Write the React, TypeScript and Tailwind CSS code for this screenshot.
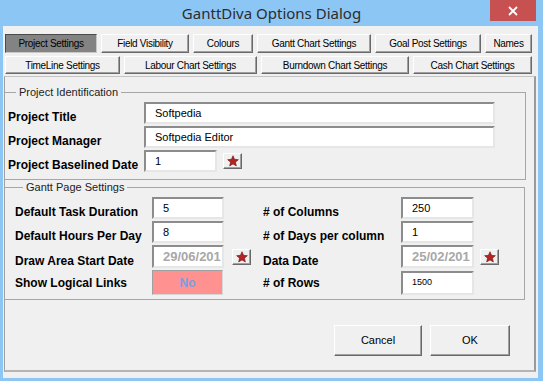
const row1 = [
  { label: 'Project Settings', w: 'w-[92px]', active: true },
  { label: 'Field Visibility', w: 'w-[88px]' },
  { label: 'Colours', w: 'w-[60px]' },
  { label: 'Gantt Chart Settings', w: 'w-[114px]' },
  { label: 'Goal Post Settings', w: 'w-[106px]' },
  { label: 'Names', w: 'w-[47px]' },
];

const row2 = [
  { label: 'TimeLine Settings', w: 'w-[115px]' },
  { label: 'Labour Chart Settings', w: 'w-[133px]' },
  { label: 'Burndown Chart Settings', w: 'w-[148px]' },
  { label: 'Cash Chart Settings', w: 'w-[119px]' },
];

const raised =
  'border border-t-white border-l-white border-r-[#696969] border-b-[#696969] shadow-[inset_-1px_-1px_0_#a0a0a0] bg-[#f0f0f0]';
const sunken =
  'border-2 border-t-[#8c8c8c] border-l-[#8c8c8c] border-r-[#e6e6e6] border-b-[#e6e6e6] bg-white';

const Tab = ({ label, w, active }: { label: string; w: string; active?: boolean }) => (
  <button
    className={`${w} h-full flex items-center justify-center text-[10px] tracking-[-0.3px] text-black ${
      active
        ? 'bg-[#838383] border border-t-[#4a4a4a] border-l-[#4a4a4a] border-r-[#c8c8c8] border-b-[#c8c8c8]'
        : raised
    }`}
  >
    {label}
  </button>
);

const StarButton = () => (
  <button className={`w-[19px] h-[16px] flex items-center justify-center ${raised}`}>
    <svg width="12" height="12" viewBox="0 0 24 24">
      <path
        d="M12 1.5l3.1 7.2 7.6.6-5.8 5 1.8 7.5L12 17.8 5.3 21.8l1.8-7.5-5.8-5 7.6-.6z"
        fill="#b32424"
        stroke="#6e1111"
        strokeWidth="1.2"
      />
    </svg>
  </button>
);

const Field = ({ value, w, dim, small }: { value: string; w: string; dim?: boolean; small?: boolean }) => (
  <div
    className={`${w} h-full ${sunken} flex items-center pl-[9px] overflow-hidden whitespace-nowrap ${
      dim ? 'text-[13px] font-bold text-[#a8a8a8]' : small ? 'text-[9px] text-black' : 'text-[11px] text-black'
    }`}
  >
    {value}
  </div>
);

const Label = ({ text, w }: { text: string; w: string }) => (
  <span className={`${w} mt-[8px] text-[12px] font-bold text-black whitespace-nowrap`}>{text}</span>
);

export default function App() {
  return (
    <div className="w-[543px] h-[381px] bg-[#8cc6f5] overflow-hidden font-['Liberation_Sans',Arial,sans-serif]">
      <div className="relative h-[26px] flex items-center justify-center">
        <span className="font-['Noto_Sans',sans-serif] text-[15px] text-[#2d2d2d]">GanttDiva Options Dialog</span>
        <div className="absolute right-[7px] top-0 w-[46px] h-[21px] bg-[#c75050] flex items-center justify-center">
          <svg width="10" height="10" viewBox="0 0 10 10">
            <path d="M1 1L9 9M9 1L1 9" stroke="white" strokeWidth="1.8" />
          </svg>
        </div>
      </div>

      <div className="ml-[3px] w-[535px] h-[352px] bg-[#f0f0f0] pt-[8px]">
        <div className="ml-[2px] flex gap-[4px] h-[19px]">
          {row1.map((t) => (
            <Tab key={t.label} {...t} />
          ))}
        </div>
        <div className="ml-[2px] mt-[3px] flex gap-[4px] h-[18px]">
          {row2.map((t) => (
            <Tab key={t.label} {...t} />
          ))}
        </div>

        <div className="ml-[1px] mt-[2px] w-[532px] h-[296px] border-t border-l border-t-[#c4c4c4] border-l-[#a0a0a0] border-r-2 border-b-2 border-r-[#9a9a9a] border-b-[#b4b4b4] flex flex-col">
          <fieldset className="mt-[9px] w-[521px] border border-l-0 border-[#a6a6a6] pl-[3px] pt-[3px] pb-[7px] flex flex-col gap-[2px]">
            <legend className="ml-[8px] px-[3px] text-[11px] leading-[13px] text-[#222]">
              Project Identification
            </legend>
            <div className="flex items-center h-[22px]">
              <Label text="Project Title" w="w-[136px]" />
              <Field value="Softpedia" w="w-[351px]" />
            </div>
            <div className="flex items-center h-[22px]">
              <Label text="Project Manager" w="w-[136px]" />
              <Field value="Softpedia Editor" w="w-[351px]" />
            </div>
            <div className="flex items-center h-[22px]">
              <Label text="Project Baselined Date" w="w-[136px]" />
              <Field value="1" w="w-[73px]" />
              <div className="ml-[6px]">
                <StarButton />
              </div>
            </div>
          </fieldset>

          <fieldset className="mt-[1px] w-[520px] border border-l-0 border-[#a6a6a6] pl-[10px] pt-[3px] pb-[4px] flex flex-col gap-[2px]">
            <legend className="ml-[8px] px-[3px] text-[11px] leading-[13px] text-[#222]">
              Gantt Page Settings
            </legend>
            <div className="flex items-center h-[22px]">
              <div className="w-[248px] flex items-center h-full">
                <Label text="Default Task Duration" w="w-[137px]" />
                <Field value="5" w="w-[72px]" />
              </div>
              <Label text="# of Columns" w="w-[138px]" />
              <Field value="250" w="w-[73px]" />
            </div>
            <div className="flex items-center h-[22px]">
              <div className="w-[248px] flex items-center h-full">
                <Label text="Default Hours Per Day" w="w-[137px]" />
                <Field value="8" w="w-[72px]" />
              </div>
              <Label text="# of Days per column" w="w-[138px]" />
              <Field value="1" w="w-[73px]" />
            </div>
            <div className="flex items-center h-[23px]">
              <div className="w-[248px] flex items-center h-full">
                <Label text="Draw Area Start Date" w="w-[137px]" />
                <Field value="29/06/201" w="w-[72px]" dim />
                <div className="ml-[8px]">
                  <StarButton />
                </div>
              </div>
              <Label text="Data Date" w="w-[138px]" />
              <Field value="25/02/201" w="w-[73px]" dim />
              <div className="ml-[6px]">
                <StarButton />
              </div>
            </div>
            <div className="flex items-center h-[25px]">
              <div className="w-[248px] flex items-center h-full">
                <span className="w-[137px] text-[12px] font-bold text-black">Show Logical Links</span>
                <button className="w-[71px] h-full bg-[#ff9191] border border-t-[#a0a0a0] border-l-[#a0a0a0] border-r-[#d6d6d6] border-b-[#d6d6d6] text-[12px] font-bold text-[#7a9fe0]">
                  No
                </button>
              </div>
              <span className="w-[138px] text-[12px] font-bold text-black"># of Rows</span>
              <div className="h-[24px] flex">
                <Field value="1500" w="w-[73px]" small />
              </div>
            </div>
          </fieldset>

          <div className="mt-[25px] pr-[24px] flex justify-end gap-[8px]">
            <button className={`w-[88px] h-[31px] text-[11px] text-black ${raised}`}>Cancel</button>
            <button className={`w-[80px] h-[31px] text-[11px] text-black ${raised}`}>OK</button>
          </div>
        </div>
      </div>
    </div>
  );
}
